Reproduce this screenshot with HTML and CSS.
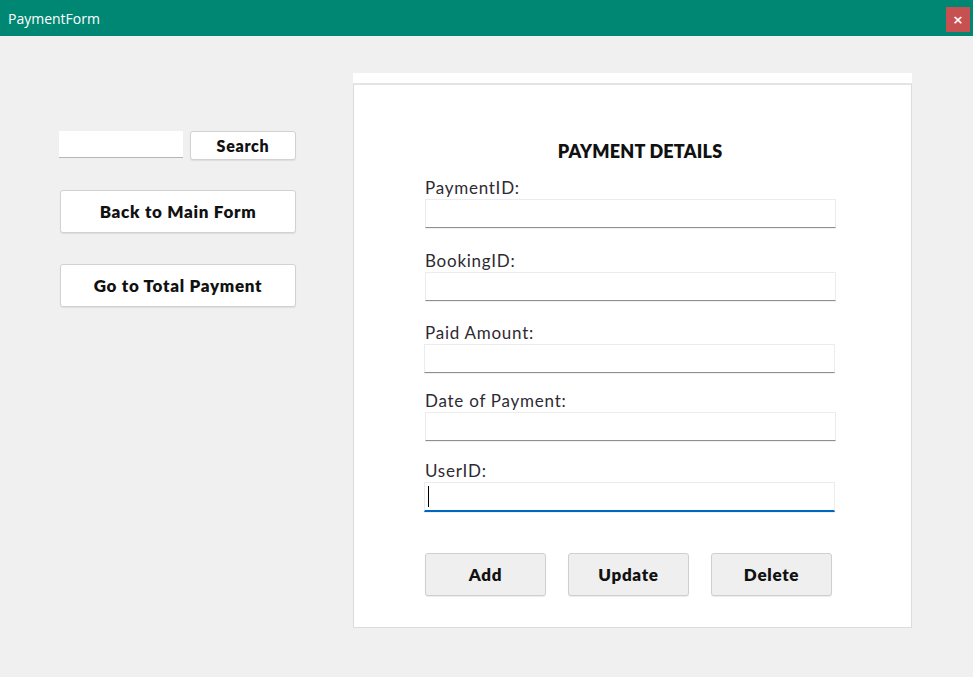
FILE: index.html
```html
<!DOCTYPE html>
<html>
<head>
<meta charset="utf-8">
<link rel="stylesheet" href="styles.css">
</head>
<body>
<div class="window">
  <div class="titlebar">
    <span class="title">PaymentForm</span>
    <span class="close">×</span>
  </div>
  <div class="content">
    <div class="side">
      <div class="search-row">
        <div class="search-box"></div>
        <button class="btn btn-search">Search</button>
      </div>
      <button class="btn btn-wide">Back to Main Form</button>
      <button class="btn btn-wide">Go to Total Payment</button>
    </div>
    <div class="panel-wrap">
      <div class="strip"></div>
      <div class="panel">
        <h1 class="heading">PAYMENT DETAILS</h1>
        <div class="field f1"><label>PaymentID:</label><div class="input"></div></div>
        <div class="field f2"><label>BookingID:</label><div class="input"></div></div>
        <div class="field f3"><label>Paid Amount:</label><div class="input shift"></div></div>
        <div class="field f4"><label>Date of Payment:</label><div class="input"></div></div>
        <div class="field f5"><label>UserID:</label><div class="input focused shift"><span class="caret"></span></div></div>
        <div class="actions">
          <button class="btn btn-act">Add</button>
          <button class="btn btn-act">Update</button>
          <button class="btn btn-act">Delete</button>
        </div>
      </div>
    </div>
  </div>
</div>
</body>
</html>
```
FILE: styles.css
```css
* { box-sizing: border-box; }
html, body { margin: 0; padding: 0; }
body {
  width: 973px; height: 677px; overflow: hidden;
  background: #f0f0f0;
  font-family: "Lato", "DejaVu Sans", sans-serif;
  color: #1a1a1a;
}
.titlebar {
  height: 36px; background: #008773;
  display: flex; align-items: center; justify-content: space-between;
  padding: 0 3px 0 8px;
}
.title { color: #fff; font-family: "Open Sans", sans-serif; font-size: 14px; }
.close {
  width: 24px; height: 25px; background: #c75050; color: #fff;
  display: flex; align-items: center; justify-content: center;
  font-family: "DejaVu Sans", sans-serif; font-size: 13px; font-weight: bold;
  margin-top: 2px;
}
.content { display: flex; padding: 37px 0 0 59px; }
.side { width: 237px; display: flex; flex-direction: column; padding-top: 58px; }
.search-row { display: flex; gap: 7px; align-items: flex-start; }
.search-box {
  width: 124px; height: 27px; background: #fff; border-bottom: 1px solid #b5b5b5;
}
.btn {
  font-family: "Lato", sans-serif; font-weight: 800; color: #111;
  background: #fff; border: 1px solid #d2d2d2; border-radius: 3px;
  box-shadow: 0 1px 1px rgba(0,0,0,0.08);
  padding: 0; cursor: default; letter-spacing: 0.7px;
}
.btn-search { width: 106px; height: 29px; font-size: 16px; }
.btn-wide { width: 236px; height: 43px; font-size: 17px; margin-left: 1px; }
.search-row + .btn-wide { margin-top: 30px; }
.btn-wide + .btn-wide { margin-top: 31px; }
.panel-wrap { margin-left: 57px; width: 559px; display: flex; flex-direction: column; }
.strip { height: 10px; background: #fff; }
.panel {
  height: 545px; background: #fff; border: 1px solid #dcdcdc; border-top: 2px solid #e4e4e4;
  padding: 55px 0 0 71px; position: relative;
}
.heading {
  margin: 0; font-size: 18px; font-weight: 800; text-align: center;
  width: 430px; margin-left: 0; letter-spacing: 0.2px; color: #111;
}
.field label {
  display: block; font-size: 17px; color: #2e2a33; height: 22px; letter-spacing: 0.75px;
}
.input {
  width: 411px; height: 29px; background: #fff;
  border: 1px solid #ececec; border-bottom: 1px solid #8f8f8f;
  box-shadow: 0 1px 0 rgba(0,0,0,0.06);
  position: relative;
}
.input.shift { margin-left: -1px; }
.f1 { margin-top: 15px; }
.f2 { margin-top: 22px; }
.f3 { margin-top: 21px; }
.f4 { margin-top: 17px; }
.f5 { margin-top: 19px; }
.input.focused { border-bottom: 2px solid #0067c0; height: 30px; }
.caret {
  position: absolute; left: 3px; top: 3px; width: 1px; height: 21px; background: #000;
}
.actions { display: flex; gap: 22px; margin-top: 41px; }
.btn-act {
  width: 121px; height: 43px; background: #efefef; border: 1px solid #cfcfcf;
  font-size: 17px;
}
```
